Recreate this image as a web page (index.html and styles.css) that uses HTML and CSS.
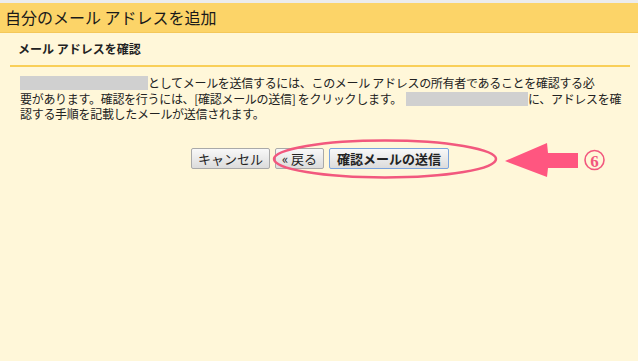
FILE: index.html
```html
<!DOCTYPE html>
<html lang="ja">
<head>
  <meta charset="UTF-8">
  <meta name="viewport" content="width=device-width, initial-scale=1.0">
  <title>自分のメール アドレスを追加</title>
  <link rel="stylesheet" href="styles.css">
</head>
<body>
  <div class="page">
    <div class="title">自分のメール アドレスを追加</div>

    <div class="section">
      <h3 class="subhead">メール アドレスを確認</h3>

      <p class="desc">
        <span class="masked masked-short"></span>としてメールを送信するには、このメール アドレスの所有者であることを確認する必<br>要があります。確認を行うには、[確認メールの送信] をクリックします。<span class="masked masked-long"></span>に、アドレスを確<br>認する手順を記載したメールが送信されます。
      </p>

      <div class="actions">
        <button type="button" class="btn">キャンセル</button>
        <button type="button" class="btn">« 戻る</button>
        <button type="button" class="btn btn-default">確認メールの送信</button>
      </div>
    </div>

    <!-- step annotation drawn over the dialog -->
    <svg class="annotation" width="638" height="361" viewBox="0 0 638 361">
      <ellipse cx="385" cy="159" rx="111" ry="18.5" fill="none" stroke="#f2587e" stroke-width="2.5"/>
      <polygon points="505,161 547,143 548,153 578,153 578,168 548,168 547,177" fill="#ff5680"/>
      <circle cx="594.5" cy="160" r="9.5" fill="none" stroke="#f2587e" stroke-width="1.6"/>
      <text x="594.5" y="166.5" class="step-num">6</text>
    </svg>
  </div>
</body>
</html>
```

FILE: styles.css
```css
body {
  margin: 0;
  background-color: #fff7d9;
  font-family: "Noto Sans CJK JP", "Liberation Sans", sans-serif;
  color: #222;
}
.page {
  position: relative;
  width: 638px;
  height: 361px;
  overflow: hidden;
  border-top: 3px solid #ececec;
  box-sizing: border-box;
}
.title {
  height: 29px;
  line-height: 29px;
  padding-left: 5px;
  background-color: #fcd468;
  border-bottom: 1px solid #f4c85a;
  font-size: 16px;
  color: #1a1a1a;
}
.section {
  padding: 0 8px 0 10px;
}
.subhead {
  margin: 0;
  padding: 7px 0 0 8px;
  height: 25px;
  font-size: 12px;
  font-weight: bold;
  line-height: 18px;
  border-bottom: 2px solid #f9cf58;
  box-sizing: content-box;
}
.desc {
  margin: 8px 0 0 10px;
  font-size: 12px;
  line-height: 15.5px;
  letter-spacing: -0.3px;
}
.masked {
  display: inline-block;
  height: 14px;
  vertical-align: -2px;
  background-color: #d0d0d0;
}
.masked-short {
  width: 128px;
}
.masked-long {
  width: 122px;
  margin-left: 4px;
}
.actions {
  display: flex;
  justify-content: center;
  gap: 5px;
  margin-top: 26px;
}
.btn {
  height: 21px;
  padding: 0 6px;
  font-family: "Noto Sans CJK JP", "Liberation Sans", sans-serif;
  font-size: 13px;
  line-height: 19px;
  color: #222;
  background: linear-gradient(#f8f8f8, #dcdcdc);
  border: 1px solid #a9a9a9;
  border-radius: 2px;
  cursor: pointer;
}
.btn-default {
  border-color: #7aa3de;
  font-weight: bold;
  padding: 0 7px;
}
.annotation {
  position: absolute;
  top: -3px;
  left: 0;
  pointer-events: none;
}
.step-num {
  font-family: "Liberation Serif", serif;
  font-size: 17px;
  font-weight: bold;
  text-anchor: middle;
  fill: #f2587e;
}
```
